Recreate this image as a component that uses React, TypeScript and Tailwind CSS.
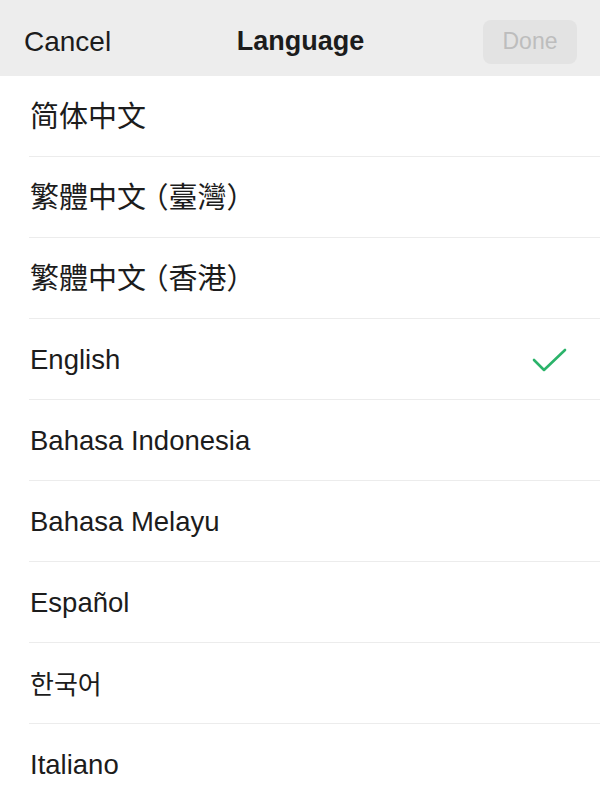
import React, { useState } from 'react';

type Lang = { id: string; label: string; font: string };

const LATIN = 'font-["Liberation_Sans",sans-serif] text-[27.5px] pt-[2px]';
const TC = 'font-["Liberation_Sans","Noto_Sans_CJK_TC",sans-serif] text-[29px] [font-feature-settings:"halt"] pt-[3px]';

const LANGS: Lang[] = [
    { id: 'zh-CN', label: '简体中文', font: 'font-["Liberation_Sans","Noto_Sans_CJK_SC",sans-serif] text-[29px] pt-[3px]' },
    { id: 'zh-TW', label: '繁體中文 （臺灣）', font: TC },
    { id: 'zh-HK', label: '繁體中文 （香港）', font: TC },
    { id: 'en', label: 'English', font: LATIN },
    { id: 'id', label: 'Bahasa Indonesia', font: LATIN },
    { id: 'ms', label: 'Bahasa Melayu', font: LATIN },
    { id: 'es', label: 'Español', font: LATIN },
    { id: 'ko', label: '한국어', font: 'font-["Liberation_Sans","Noto_Sans_CJK_KR",sans-serif] text-[26px] pt-[3px]' },
    { id: 'it', label: 'Italiano', font: LATIN },
];

const Check = () => (
    <svg width="36" height="26" viewBox="0 0 36 26" fill="none" className="mt-[2px]">
        <path d="M3 13 L13 23 L34 3" stroke="#2bb36a" strokeWidth="2.6" strokeLinecap="round" strokeLinejoin="round" />
    </svg>
);

export default function App() {
    const [selected, setSelected] = useState('en');

    return (
        <div className='w-[600px] h-[800px] overflow-hidden bg-white font-["Liberation_Sans",sans-serif] text-[#1c1c1c]'>
            <header className="h-[76px] bg-[#ededed] grid grid-cols-[1fr_auto_1fr] items-center pt-[7px] pl-[24px] pr-[23px]">
                <button className="justify-self-start text-[28px] leading-none text-[#1c1c1c]">Cancel</button>
                <h1 className="text-[27px] leading-none font-semibold">Language</h1>
                <button disabled className="justify-self-end w-[94px] h-[44px] rounded-[8px] bg-[#e3e3e3] text-[23px] text-[#bdbdbd]">Done</button>
            </header>
            <ul>
                {LANGS.map(l => (
                    <li key={l.id} className="pl-[29px]" onClick={() => setSelected(l.id)}>
                        <div className="h-[81px] border-b border-[#ececec] flex items-center justify-between pl-px pr-[33px]">
                            <span className={`${l.font} leading-none`}>{l.label}</span>
                            {selected === l.id && <Check />}
                        </div>
                    </li>
                ))}
            </ul>
        </div>
    );
}
